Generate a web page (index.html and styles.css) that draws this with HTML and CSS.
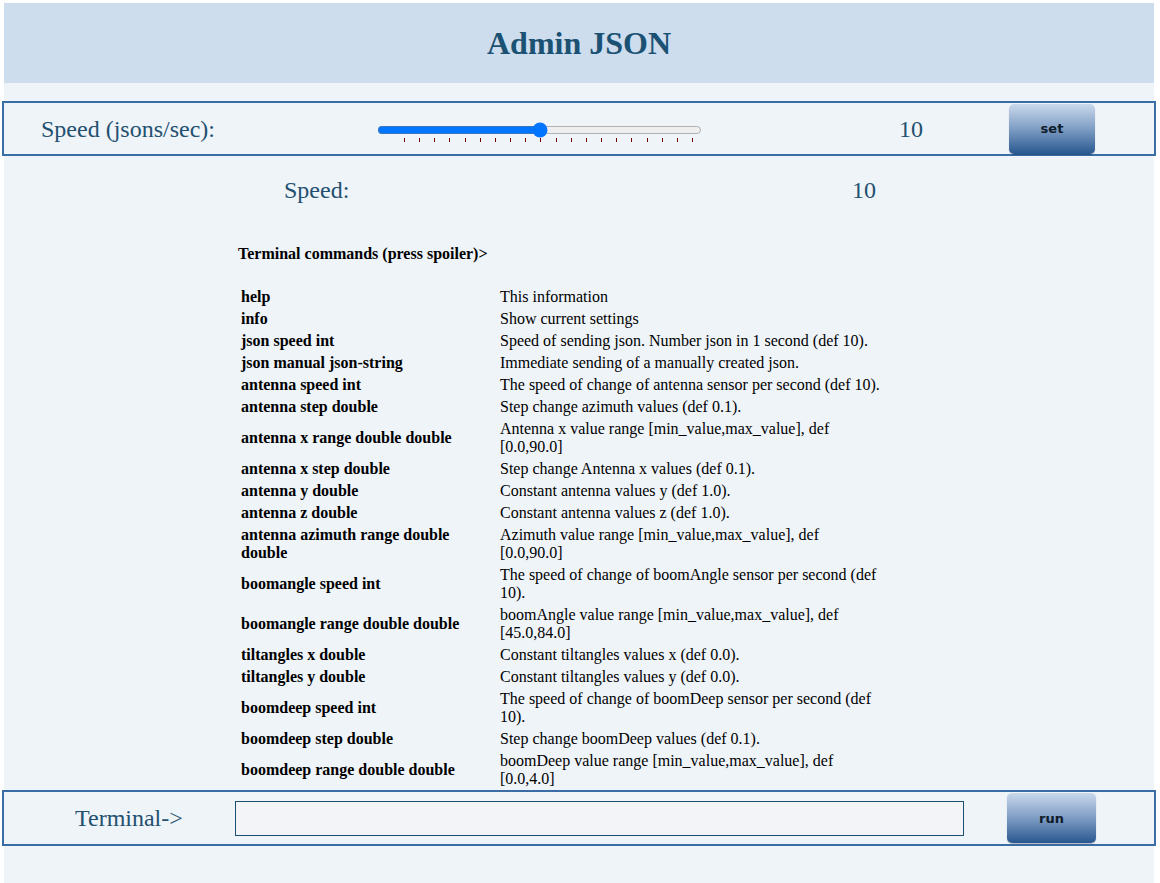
FILE: index.html
```html
<!DOCTYPE html>
<html lang="en">
<head>
<meta charset="utf-8">
<title>Admin JSON</title>
<link rel="stylesheet" href="styles.css">
</head>
<body>
<div class="page">
  <header class="top"><h1>Admin JSON</h1></header>

  <section class="panel speed-panel">
    <span class="label label-speed">Speed (jsons/sec):</span>
    <div class="slider">
      <input class="range" type="range" min="0" max="20" value="10">
      <div class="ticks"><i></i><i></i><i></i><i></i><i></i><i></i><i></i><i></i><i></i><i></i><i></i><i></i><i></i><i></i><i></i><i></i><i></i><i></i><i></i><i></i></div>
    </div>
    <span class="label value">10</span>
    <button class="btn btn-set">set</button>
  </section>

  <div class="speed-row">
    <span class="label speed-name">Speed:</span>
    <span class="label">10</span>
  </div>

  <div class="cmds">
    <div class="cmds-title">Terminal commands (press spoiler)&gt;</div>
    <table class="cmd-table">
      <tr><th>help</th><td>This information</td></tr>
      <tr><th>info</th><td>Show current settings</td></tr>
      <tr><th>json speed int</th><td>Speed of sending json. Number json in 1 second (def 10).</td></tr>
      <tr><th>json manual json-string</th><td>Immediate sending of a manually created json.</td></tr>
      <tr><th>antenna speed int</th><td>The speed of change of antenna sensor per second (def 10).</td></tr>
      <tr><th>antenna step double</th><td>Step change azimuth values (def 0.1).</td></tr>
      <tr><th>antenna x range double double</th><td>Antenna x value range [min_value,max_value], def [0.0,90.0]</td></tr>
      <tr><th>antenna x step double</th><td>Step change Antenna x values (def 0.1).</td></tr>
      <tr><th>antenna y double</th><td>Constant antenna values y (def 1.0).</td></tr>
      <tr><th>antenna z double</th><td>Constant antenna values z (def 1.0).</td></tr>
      <tr><th>antenna azimuth range double double</th><td>Azimuth value range [min_value,max_value], def [0.0,90.0]</td></tr>
      <tr><th>boomangle speed int</th><td>The speed of change of boomAngle sensor per second (def 10).</td></tr>
      <tr><th>boomangle range double double</th><td>boomAngle value range [min_value,max_value], def [45.0,84.0]</td></tr>
      <tr><th>tiltangles x double</th><td>Constant tiltangles values x (def 0.0).</td></tr>
      <tr><th>tiltangles y double</th><td>Constant tiltangles values y (def 0.0).</td></tr>
      <tr><th>boomdeep speed int</th><td>The speed of change of boomDeep sensor per second (def 10).</td></tr>
      <tr><th>boomdeep step double</th><td>Step change boomDeep values (def 0.1).</td></tr>
      <tr><th>boomdeep range double double</th><td>boomDeep value range [min_value,max_value], def [0.0,4.0]</td></tr>
    </table>
  </div>

  <section class="panel term-panel">
    <span class="label term-label">Terminal-&gt;</span>
    <input class="term-input" type="text">
    <button class="btn btn-run">run</button>
  </section>
</div>
</body>
</html>
```

FILE: styles.css
```css
html, body {
  margin: 0;
  padding: 0;
  background: #ffffff;
}

body {
  padding: 3px 6px 0 4px;
  font-family: "Liberation Serif", "Times New Roman", serif;
}

.page {
  background: #eff4f9;
  min-height: 880px;
}

.top {
  background: #cddded;
  height: 80px;
  display: flex;
  align-items: center;
  justify-content: center;
}

.top h1 {
  margin: 0;
  font-family: "Liberation Serif", "Times New Roman", serif;
  font-size: 32px;
  font-weight: bold;
  color: #1b5173;
  line-height: 40px;
}

.panel {
  border: 2px solid #3a6ca6;
  margin: 0 -2px;
  display: flex;
  align-items: center;
}

.label {
  font-family: "Liberation Serif", "Times New Roman", serif;
  font-size: 24px;
  color: #23506f;
  line-height: 28px;
}

.speed-panel {
  margin-top: 18px;
  height: 51px;
}

.label-speed {
  margin-left: 37px;
  width: 336px;
}

.slider {
  display: flex;
  flex-direction: column;
  width: 325px;
  padding-top: 6px;
}

.range {
  margin: 0;
  width: 325px;
  height: 16px;
  accent-color: #0075ff;
}

.ticks {
  display: flex;
  justify-content: space-between;
  width: 289px;
  margin-left: 27px;
}

.ticks i {
  display: block;
  width: 1px;
  height: 4px;
  background: #6e0000;
}

.value {
  margin-left: 197px;
  width: 110px;
}

.btn {
  font-family: "DejaVu Sans", "Liberation Sans", sans-serif;
  font-weight: bold;
  font-size: 13px;
  color: #0f1b2a;
  border: none;
  border-radius: 5px;
  background: linear-gradient(to bottom, #cad9ec 0%, #7e9dc4 50%, #28578f 100%);
  box-shadow: 0 1px 1px rgba(0, 0, 0, 0.25);
  padding: 0;
}

.btn-set {
  width: 86px;
  height: 50px;
}

.speed-row {
  display: flex;
  padding-top: 20px;
}

.speed-name {
  margin-left: 280px;
  width: 568px;
}

.cmds {
  margin-left: 234px;
}

.cmds-title {
  margin-top: 41px;
  font-family: "Liberation Serif", "Times New Roman", serif;
  font-size: 16px;
  line-height: 18px;
  font-weight: bold;
  color: #000;
}

.cmd-table {
  margin-top: 22px;
  border-collapse: separate;
  border-spacing: 2px;
  font-family: "Liberation Serif", "Times New Roman", serif;
  font-size: 16px;
  line-height: 18px;
  color: #000;
  table-layout: fixed;
  width: 646px;
}

.cmd-table th,
.cmd-table td {
  padding: 1px;
  vertical-align: middle;
  text-align: left;
}

.cmd-table th {
  width: 255px;
  font-weight: bold;
}

.term-panel {
  margin-top: -1px;
  height: 52px;
}

.term-label {
  margin-left: 71px;
  width: 160px;
}

.term-input {
  box-sizing: border-box;
  width: 729px;
  height: 35px;
  margin: 0;
  border: 1px solid #1b4f72;
  background: #f2f4f8;
  padding: 0 4px;
}

.btn-run {
  margin-left: 43px;
  width: 89px;
  height: 50px;
}
```
